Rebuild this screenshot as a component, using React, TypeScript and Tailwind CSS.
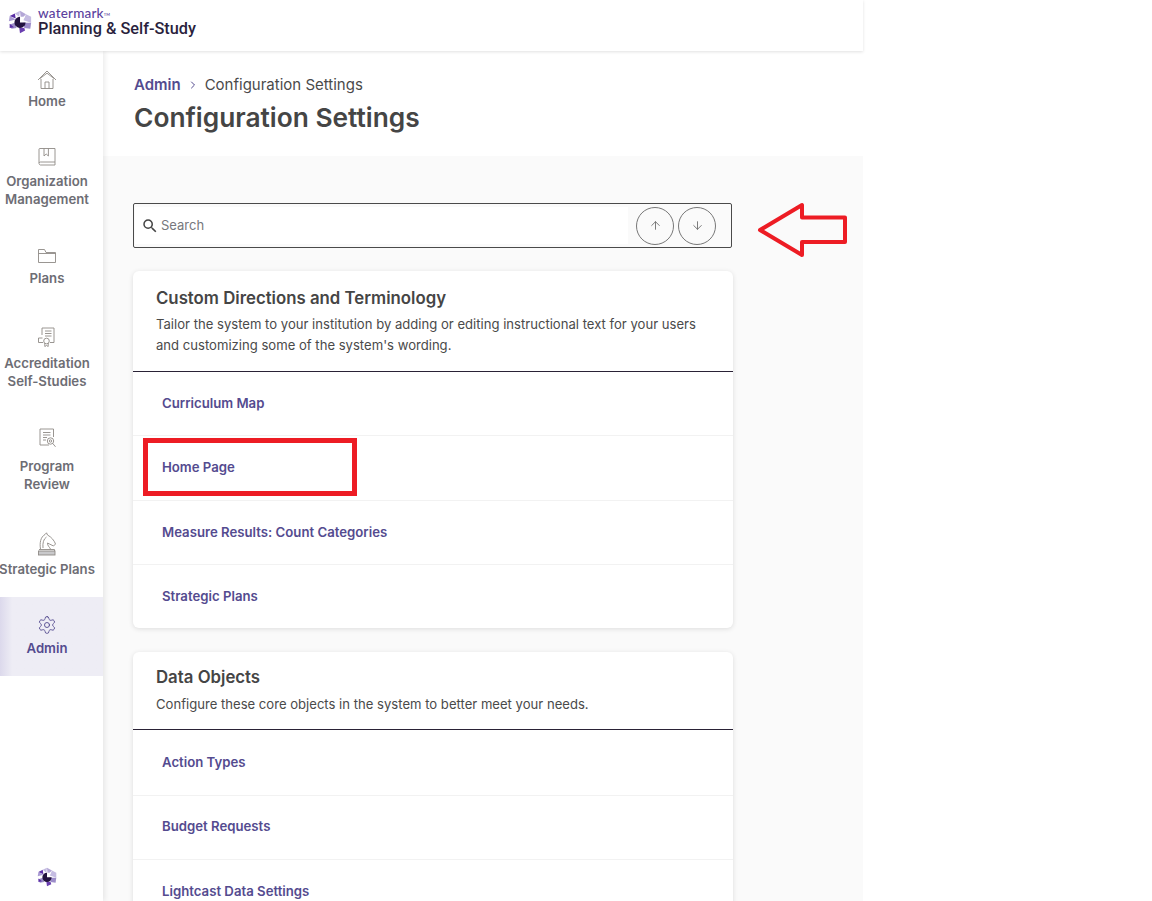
import { ArrowUp, ArrowDown, ChevronRight } from "lucide-react";

const inter = { fontFamily: "Inter, sans-serif" };

// hexagon of purple triangles with the dark pie in the middle
function Logo({ className }: { className: string }) {
  return (
    <svg viewBox="0 0 28 28" className={className}>
      <path d="M14 1 L21 5 L15 11Z" fill="#b3a6d6" />
      <path d="M21 5 L27 8 L27 15 L18 12Z" fill="#c5bce2" />
      <path d="M27 15 L26 22 L19 21 L18 15Z" fill="#9c8cc9" />
      <path d="M19 21 L20 24 L14 27 L13 20Z" fill="#6a3fb0" />
      <path d="M10 21 L4 22 L2 17 L8 15Z" fill="#9c8cc9" />
      <path d="M7 20 L2 21 L2 16Z" fill="#5a2ea6" />
      <path d="M1 13 L2 7 L9 11Z" fill="#a99bd3" />
      <path d="M2 7 L8 4 L9 10Z" fill="#5a2ea6" />
      <path d="M8 4 L14 1 L13 8Z" fill="#c5bce2" />
      <path d="M14 8 A6.5 6.5 0 1 0 20.5 14.5 L14 14.5Z" fill="#22123f" />
      <path d="M14 8 L20 8 L15 13Z" fill="#ffffff" />
    </svg>
  );
}

function HomeIcon() {
  return (
    <svg viewBox="0 0 20 20" className="w-5 h-5" fill="none" stroke="#8f8a86" strokeWidth="0.9">
      <path d="M1 10 L10 1 L19 10" />
      <path d="M3 8.5 L10 3.2 L17 8.5" />
      <path d="M4 9 V18.5 H16 V9" />
      <path d="M8 18.5 V12 H12 V18.5" />
    </svg>
  );
}

function BookIcon() {
  return (
    <svg viewBox="0 0 20 20" className="w-5 h-5" fill="none" stroke="#8f8a86" strokeWidth="0.9">
      <path d="M2 16 V2 A0.8 0.8 0 0 1 2.8 1.5 H18 V15 H3.5 A1.5 1.5 0 0 0 2 16.5 A1.8 1.8 0 0 0 3.5 18 H18 V15" />
      <path d="M7 1.5 V9 L9.2 7 L11.4 9 V1.5" />
    </svg>
  );
}

function FolderIcon() {
  return (
    <svg viewBox="0 0 20 20" className="w-5 h-5" fill="none" stroke="#8f8a86" strokeWidth="0.9">
      <path d="M1.5 5 V16.5 H18.5 V6.5 H9 L7.5 3.5 H1.5Z" />
      <path d="M1.5 7.5 H18.5" />
    </svg>
  );
}

function CertIcon() {
  return (
    <svg viewBox="0 0 20 20" className="w-5 h-5" fill="none" stroke="#8f8a86" strokeWidth="0.9">
      <path d="M5 8 V1 H17 V15.5 H13" />
      <path d="M8 4 H14.5 M8 6.5 H14.5 M8 9 H14.5" />
      <path d="M5.5 11 H1.5 V15.5 H6" />
      <circle cx="9.5" cy="14" r="2.8" />
      <path d="M7.8 16 V19.5 L9.5 18.5 L11.2 19.5 V16" />
    </svg>
  );
}

function ReviewIcon() {
  return (
    <svg viewBox="0 0 20 20" className="w-5 h-5" fill="none" stroke="#8f8a86" strokeWidth="0.9">
      <path d="M16.5 9 V1 H3 V17 H12" />
      <path d="M6 4.5 H13.5 M6 7 H13.5 M6 9.5 H10 M6 12 H9" />
      <circle cx="13.5" cy="13" r="3.2" />
      <circle cx="13.5" cy="13" r="1.2" />
      <path d="M15.8 15.5 L18.5 18.8" />
    </svg>
  );
}

function KnightIcon() {
  return (
    <svg viewBox="0 0 20 24" className="w-5 h-6" fill="none" stroke="#8f8a86" strokeWidth="0.9">
      <path d="M3.5 17 C2.5 11 3.5 5 8 2.5 L9.5 0.8 L10.5 3 C14.5 5 17.5 9 18.5 12 L16.5 14 L12.5 12 L10.5 11 C10.5 14 12.5 15 13.5 17" />
      <path d="M6 16 C5.5 11 6.5 7 9.5 5" />
      <path d="M2 17.5 H17.5 V19" />
      <rect x="1.5" y="19" width="16.5" height="4" fill="#c9c9cb" />
    </svg>
  );
}

function GearIcon() {
  return (
    <svg viewBox="0 0 24 24" className="w-5 h-5" fill="none" stroke="#544b8f" strokeWidth="1.1" strokeLinecap="round" strokeLinejoin="round">
      <path d="M12.22 2h-.44a2 2 0 0 0-2 2v.18a2 2 0 0 1-1 1.73l-.43.25a2 2 0 0 1-2 0l-.15-.08a2 2 0 0 0-2.73.73l-.22.38a2 2 0 0 0 .73 2.73l.15.1a2 2 0 0 1 1 1.72v.51a2 2 0 0 1-1 1.74l-.15.09a2 2 0 0 0-.73 2.73l.22.38a2 2 0 0 0 2.73.73l.15-.08a2 2 0 0 1 2 0l.43.25a2 2 0 0 1 1 1.73V20a2 2 0 0 0 2 2h.44a2 2 0 0 0 2-2v-.18a2 2 0 0 1 1-1.73l.43-.25a2 2 0 0 1 2 0l.15.08a2 2 0 0 0 2.73-.73l.22-.39a2 2 0 0 0-.73-2.73l-.15-.08a2 2 0 0 1-1-1.74v-.5a2 2 0 0 1 1-1.74l.15-.09a2 2 0 0 0 .73-2.73l-.22-.38a2 2 0 0 0-2.73-.73l-.15.08a2 2 0 0 1-2 0l-.43-.25a2 2 0 0 1-1-1.73V4a2 2 0 0 0-2-2z" />
      <circle cx="12" cy="12" r="3" />
    </svg>
  );
}

function SearchIcon() {
  return (
    <svg viewBox="0 0 24 24" className="w-[18px] h-[18px]" fill="#444444">
      <path d="M15.5 14h-.79l-.28-.27A6.47 6.47 0 0 0 16 9.5 6.5 6.5 0 1 0 9.5 16c1.61 0 3.09-.59 4.23-1.57l.27.28v.79l5 4.99L20.49 19l-4.99-5zm-6 0C7.01 14 5 11.99 5 9.5S7.01 5 9.5 5 14 7.01 14 9.5 11.99 14 9.5 14z" />
    </svg>
  );
}

function NavItem({ icon, lines, box, active }: { icon: React.ReactNode; lines: string[]; box: string; active?: boolean }) {
  return (
    <div className={`flex flex-col items-center pr-[9px] ${box} ${active ? "bg-gradient-to-r from-[#dcd9ec] via-[#eeedf5] via-[12%] to-[#eeedf5] text-[#544b8f]" : "text-[#6d6d74]"}`}>
      <div className="h-5 flex items-center justify-center">{icon}</div>
      <div className="text-[13.2px] leading-[18px] font-semibold text-center whitespace-nowrap">
        {lines.map((l) => (
          <div key={l}>{l}</div>
        ))}
      </div>
    </div>
  );
}

function Card({ title, desc, rows, className, head, descGap, rowsTop }: { title: string; desc: string[]; rows: string[]; className: string; head: string; descGap: string; rowsTop?: string }) {
  return (
    <div className={`bg-white rounded-md shadow-[0_1px_5px_rgba(0,0,0,0.12)] ${className}`}>
      <div className={`px-[23px] border-b border-[#2a2236] ${head}`}>
        <h2 className="text-[16.8px] leading-[22px] font-semibold text-[#454545]">{title}</h2>
        <div className={`text-[13.1px] leading-[21px] text-[#4a4a4a] ${descGap}`}>
          {desc.map((d) => (
            <p key={d}>{d}</p>
          ))}
        </div>
      </div>
      <div className={rowsTop}>
        {rows.map((r, i) => (
          <div
            key={r}
            className={`flex items-center px-[29px] text-[13.2px] font-semibold text-[#544b8f] ${i < rows.length - 1 ? "h-[64.4px] border-b border-[#f2f2f2]" : "h-[63px]"}`}
          >
            {r}
          </div>
        ))}
      </div>
    </div>
  );
}

export default function App() {
  return (
    <div className="relative w-[1152px] h-[901px] overflow-hidden bg-white" style={inter}>
      <div className="w-[863px] h-full flex flex-col">
        <header className="h-[51px] shrink-0 flex items-start pl-2 pt-[7px] gap-[6px] bg-white shadow-[0_1px_3px_rgba(0,0,0,0.12)] relative z-10">
          <Logo className="w-6 h-[28px] mt-[1px]" />
          <div className="flex flex-col">
            <span className="text-[13.5px] leading-[12px] font-medium text-[#5b3f9e] tracking-[0.2px]" style={{ fontFamily: "Lato, sans-serif" }}>
              watermark<sup className="text-[4px]">TM</sup>
            </span>
            <span className="text-[16.3px] leading-[20px] font-medium text-[#2a1f3d]" style={{ fontFamily: "Roboto, sans-serif" }}>
              Planning &amp; Self-Study
            </span>
          </div>
        </header>
        <div className="flex-1 flex min-h-0">
          <nav className="w-[103px] shrink-0 bg-white shadow-[2px_0_5px_rgba(0,0,0,0.08)] flex flex-col relative z-[5]">
            <NavItem icon={<HomeIcon />} lines={["Home"]} box="h-[78px] pt-[19px] gap-[2px]" />
            <NavItem icon={<BookIcon />} lines={["Organization", "Management"]} box="h-[99px] pt-[18px] gap-[5px]" />
            <NavItem icon={<FolderIcon />} lines={["Plans"]} box="h-[81px] pt-[18px] gap-[3px]" />
            <NavItem icon={<CertIcon />} lines={["Accreditation", "Self-Studies"]} box="h-[101px] pt-[18px] gap-[7px]" />
            <NavItem icon={<ReviewIcon />} lines={["Program", "Review"]} box="h-[106px] pt-[18px] gap-[9px]" />
            <NavItem icon={<KnightIcon />} lines={["Strategic Plans"]} box="h-[81px] pt-[18px] gap-[6px]" />
            <NavItem icon={<GearIcon />} lines={["Admin"]} box="h-[79px] pt-[18px] gap-[4px]" active />
            <div className="mt-auto pb-[14px] pr-[9px] flex justify-center">
              <Logo className="w-5 h-5" />
            </div>
          </nav>
          <main className="flex-1 min-w-0 bg-[#fafafa] overflow-hidden">
            <div className="h-[105px] bg-white pl-[31px] pt-[24px]">
              <div className="flex items-center text-[15px] leading-5">
                <span className="font-semibold text-[#544b8f]">Admin</span>
                <ChevronRight className="w-3 h-3 mx-[6px] text-[#544b8f]" />
                <span className="text-[#4a4a4a]">Configuration Settings</span>
              </div>
              <h1 className="mt-[7px] text-[26.3px] leading-8 font-semibold text-[#454545]">Configuration Settings</h1>
            </div>
            <div className="pl-[30px] pt-[47px]">
              <div className="w-[599px] h-[45px] flex items-center border border-[#4a4a4a] rounded-[2px] pl-[1px] pr-[15px] py-[3px]">
                <div className="flex-1 h-full bg-white flex items-center pl-[6px] gap-[2px]">
                  <SearchIcon />
                  <span className="text-[13px] text-[#77777c]">Search</span>
                </div>
                <div className="flex gap-[4px] ml-2">
                  <div className="w-[38px] h-[38px] rounded-full border border-[#777777] flex items-center justify-center">
                    <ArrowUp className="w-[13px] h-[13px] text-[#707070]" strokeWidth={1.7} />
                  </div>
                  <div className="w-[38px] h-[38px] rounded-full border border-[#777777] flex items-center justify-center">
                    <ArrowDown className="w-[13px] h-[13px] text-[#707070]" strokeWidth={1.7} />
                  </div>
                </div>
              </div>
              <Card
                className="w-[600px] mt-[23px]"
                head="pt-4 pb-[15px]"
                descGap="mt-[5px]"
                title="Custom Directions and Terminology"
                desc={[
                  "Tailor the system to your institution by adding or editing instructional text for your users",
                  "and customizing some of the system's wording.",
                ]}
                rows={["Curriculum Map", "Home Page", "Measure Results: Count Categories", "Strategic Plans"]}
              />
              <Card
                className="w-[600px] mt-[24px]"
                head="pt-[14px] pb-[14px]"
                descGap="mt-[6px]"
                rowsTop="pt-[1px]"
                title="Data Objects"
                desc={["Configure these core objects in the system to better meet your needs."]}
                rows={["Action Types", "Budget Requests", "Lightcast Data Settings"]}
              />
            </div>
          </main>
        </div>
      </div>
      {/* annotations drawn over the screenshot */}
      <div className="absolute left-[143px] top-[438px] w-[214px] h-[58px] border-[5px] border-[#ed1c24] z-20" />
      <svg className="absolute left-[750px] top-[195px] w-[105px] h-[70px] z-20" viewBox="0 0 105 70" fill="none">
        <path d="M10 35 L52 10 V22.5 H95 V47 H52 V60 Z" stroke="#ed1c24" strokeWidth="4" strokeLinejoin="round" />
      </svg>
    </div>
  );
}
